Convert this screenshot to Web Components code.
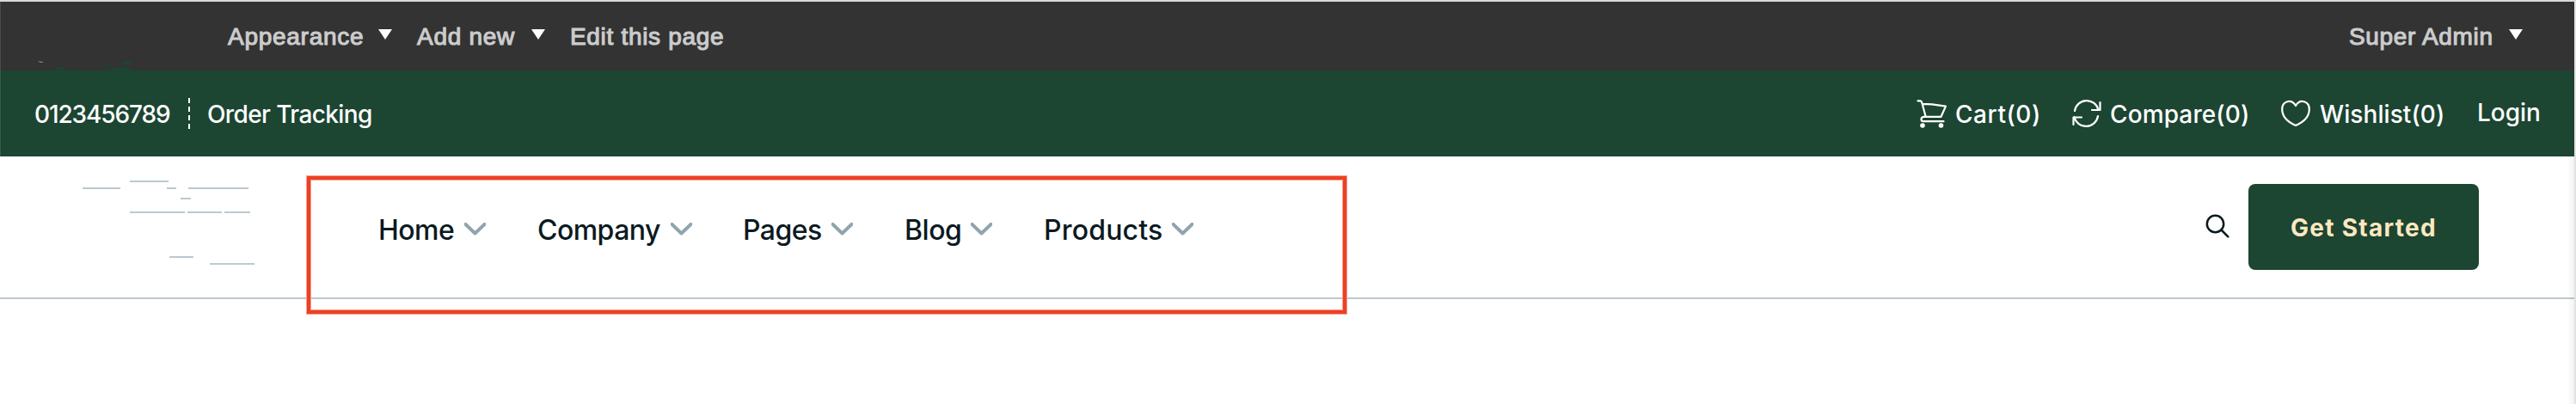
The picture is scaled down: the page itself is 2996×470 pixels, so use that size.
<!DOCTYPE html>
<html lang="en"><head><meta charset="utf-8"><title>Site header</title>
<style>html,body{margin:0;background:#fff;overflow:hidden}body{height:470px}</style></head>
<body><site-page></site-page>
<script>
const define=(name,css,html)=>customElements.define(name,class extends HTMLElement{
  constructor(){super();this.attachShadow({mode:'open'}).innerHTML=`<style>:host{box-sizing:border-box}${css}</style>${html}`;}
});

// A single-line label whose glyphs span exactly the width in "w".
customElements.define('fit-label',class extends HTMLElement{
  constructor(){super();this.attachShadow({mode:'open'}).innerHTML='<style>:host{display:block;flex:none;white-space:pre;line-height:40px}span{display:inline-block}</style><span><slot></slot></span>';}
  connectedCallback(){
    const t=this.textContent,w=+this.getAttribute('w'),cs=getComputedStyle(this);
    const c=document.createElement('canvas').getContext('2d');
    c.font=`${cs.fontWeight} ${cs.fontSize} ${cs.fontFamily}`;
    const m=c.measureText(t),ink=m.actualBoundingBoxLeft+m.actualBoundingBoxRight;
    this.style.width=w+'px';
    const s=this.shadowRoot.querySelector('span');
    s.style.letterSpacing=((w-ink)/(t.length-1))+'px';
    s.style.marginLeft=m.actualBoundingBoxLeft+'px';
  }
});

define('down-caret',':host{display:block;flex:none;width:16px;height:12px;margin-top:-5px}svg{display:block}','<svg width="16" height="12"><path d="M0 0H16L8 12Z" fill="#fff"/></svg>');

define('admin-bar',`:host{display:flex;align-items:center;height:80px;background:#333;color:#ccc;padding:0 60px 0 265px;font:400 28px "Liberation Sans",Arial,sans-serif;-webkit-text-stroke:1.1px #ccc;position:relative}
.logo{position:absolute;left:40px;top:66px}.c1{margin:-5px 29px 0 18px}.c2{margin:-5px 31px 0 19px}.c3{margin-left:19px}fit-label{margin-top:1px}`,
`<svg class="logo" width="116" height="16"><path d="M4 3.5Q8 2.500 11 5Q8 5.500 4 3.500Z" fill="#888"/><g fill="#1c4532"><ellipse cx="31" cy="11.5" rx="6" ry="1.8"/><ellipse cx="85" cy="7" rx="4" ry="1.6"/><ellipse cx="107" cy="5.5" rx="6" ry="1.8"/><path d="M84 12Q92 13 98 11Q107 9 112 11Q110 15 100 16Q88 15 84 12Z"/></g></svg>
<fit-label w="157">Appearance</fit-label><down-caret class="c1"></down-caret><fit-label w="114">Add new</fit-label><down-caret class="c2"></down-caret><fit-label w="176">Edit this page</fit-label>
<fit-label w="166" style="margin-left:auto">Super Admin</fit-label><down-caret class="c3"></down-caret>`);

define('icon-cart',':host{display:block;flex:none;width:36px;height:34px}svg{display:block}',
`<svg width="36" height="34" fill="none" stroke="#fff" stroke-width="2.200" stroke-linejoin="round" stroke-linecap="round"><path d="M1.500 2.300H4Q5.800 2.300 6.300 4.500L10.700 20.800M6.800 5.800L18 6.300L34 8.600L28.500 20.800H8.500Q5.500 21.200 5.500 23.700T8 26.200H31.500"/><g fill="#fff" stroke="none"><circle cx="7" cy="31" r="2.800"/><circle cx="28.500" cy="31" r="2.800"/></g></svg>`);
define('icon-compare',':host{display:block;flex:none;width:34px;height:32px}svg{display:block}',
`<svg width="34" height="32" fill="none" stroke="#fff" stroke-width="2.200" stroke-linecap="round" stroke-linejoin="round"><path d="M3 13A14 14 0 0 1 30.500 12M32.500 3V12H23M30 19A14 14 0 0 1 2.500 20M1.500 29V20.500H11"/></svg>`);
define('icon-heart',':host{display:block;flex:none;width:34px;height:32px}svg{display:block}',
`<svg width="34" height="32" fill="none" stroke="#fff" stroke-width="2.200" stroke-linejoin="round"><path d="M17 7C14.500 2.500 10.500 1.200 7.200 2.200C3 3.500 1.200 6.800 1.200 11C1.200 20 9 26.500 17 30C25 26.500 32.800 20 32.800 11C32.800 6.800 31 3.500 26.800 2.200C23.500 1.200 19.500 2.500 17 7Z"/></svg>`);

define('utility-bar',`:host{display:flex;align-items:center;height:100px;background:#1c4532;color:#fff;padding:0 41px;font:500 28px Inter,sans-serif}
fit-label{margin-top:2px}.sep{flex:none;width:2px;height:36px;margin:0 21px;background:repeating-linear-gradient(#fff 0 6px,transparent 6px 10px)}
.r{display:flex;align-items:center;margin-left:auto}`,
`<fit-label w="157">0123456789</fit-label><div class="sep"></div><fit-label w="190">Order Tracking</fit-label>
<div class="r"><icon-cart></icon-cart><fit-label w="96" style="margin-left:10px">Cart(0)</fit-label>
<icon-compare style="margin-left:39px"></icon-compare><fit-label w="159" style="margin-left:11px">Compare(0)</fit-label>
<icon-heart style="margin-left:39px"></icon-heart><fit-label w="143" style="margin-left:11px">Wishlist(0)</fit-label>
<fit-label w="70" style="margin:-2px 0 0 42px">Login</fit-label></div>`);

define('nav-item',':host{display:flex;align-items:center;gap:12px;flex:none}svg{display:block;margin-top:-2px}',
'<slot></slot><svg width="25" height="16" fill="none" stroke="#90a4ae" stroke-width="4"><path d="M1.500 2L12.500 12.500L23.500 2" stroke-linecap="square" stroke-linejoin="round"/></svg>');

define('brand-mark',':host{display:block;flex:none;width:208px;height:102px}svg{display:block}',
`<svg width="208" height="102" stroke="#bcc9cf" stroke-width="2" stroke-linecap="butt"><path d="M61 1H106M6 9H50M104 9H115M129 9H199M120 21H132M61 37H125M128 37H168M171 37H201M107 89H135M154 97H206"/></svg>`);

define('cta-button',':host{display:flex;align-items:center;justify-content:center;flex:none;width:268px;height:100px;border-radius:8px;background:#1c4532;color:#ffe8c0;font:700 28px Inter,sans-serif}','<slot></slot>');

define('main-header',`:host{display:flex;align-items:flex-start;height:166px;border-bottom:2px solid #bcc8cd;padding:28px 111px 0 90px;color:#0b1a1f;font:450 32px Inter,sans-serif}
nav{display:flex;margin:38px 0 0 144px}.search{margin:39px 22px 0 auto;flex:none}cta-button{margin-top:4px}cta-button fit-label{margin:2px 2px 0 0}`,
`<brand-mark></brand-mark><nav>
<nav-item><fit-label w="86">Home</fit-label></nav-item>
<nav-item style="margin-left:61px"><fit-label w="142">Company</fit-label></nav-item>
<nav-item style="margin-left:61px"><fit-label w="89">Pages</fit-label></nav-item>
<nav-item style="margin-left:62px"><fit-label w="63">Blog</fit-label></nav-item>
<nav-item style="margin-left:62px"><fit-label w="135">Products</fit-label></nav-item></nav>
<svg class="search" width="28" height="28" fill="none" stroke="#0b1a1f" stroke-width="2.500" stroke-linecap="round"><circle cx="11.500" cy="11.500" r="9.700"/><path d="M18.500 18.500L26.300 26.300"/></svg>
<cta-button><fit-label w="166">Get Started</fit-label></cta-button>`);

define('highlight-frame',':host{display:block;position:absolute;left:357px;top:205px;width:1209px;height:160px;border:4px solid #ec4024;box-shadow:0 0 0 1px #f4a090,inset 0 0 0 1px #f4a090;pointer-events:none}','');

define('site-page',`:host{display:block;position:relative;width:2996px;height:470px;background:#fff;border-top:2px solid #d9dadb;border-right:2px solid #e3e3e3}
.edge{position:absolute;right:0;top:0;width:8px;height:468px;background:linear-gradient(90deg,transparent,rgba(0,0,0,.05))}
.left{position:absolute;left:0;top:0;width:1px;height:180px;background:rgba(255,255,255,.12)}highlight-frame{margin-top:-2px}`,
`<admin-bar></admin-bar><utility-bar></utility-bar><main-header></main-header><highlight-frame></highlight-frame><div class="edge"></div><div class="left"></div>`);
</script></body></html>
